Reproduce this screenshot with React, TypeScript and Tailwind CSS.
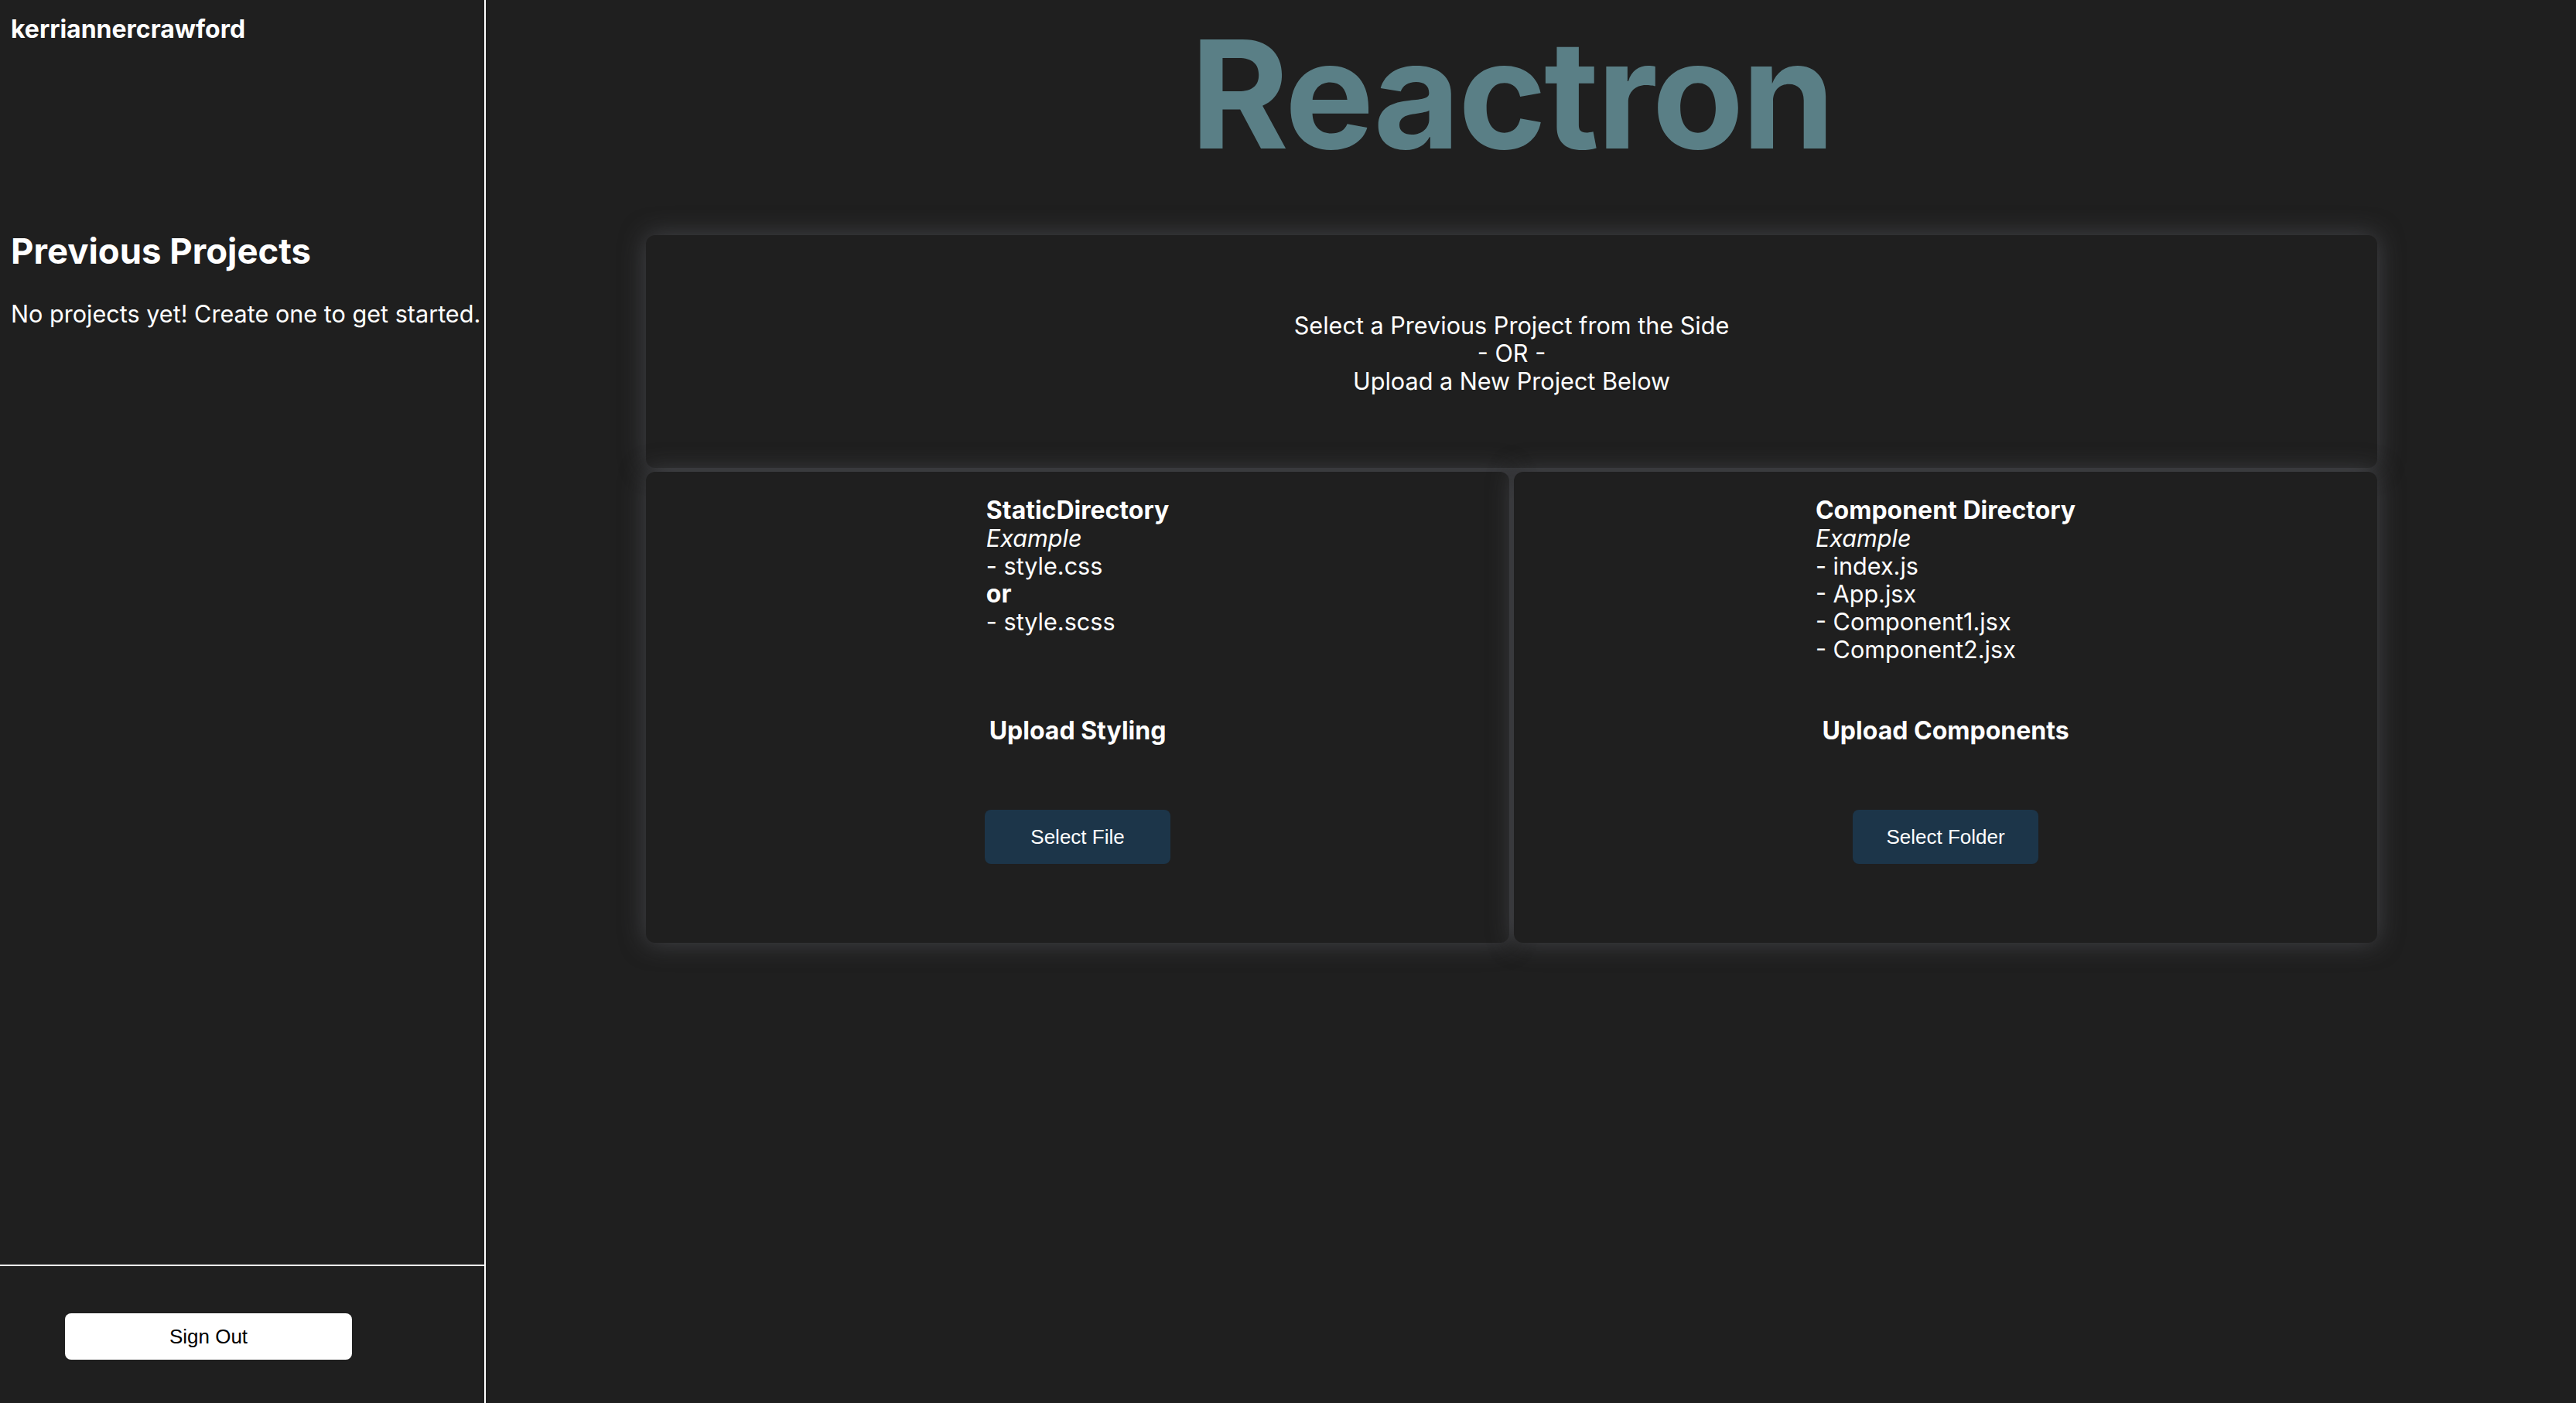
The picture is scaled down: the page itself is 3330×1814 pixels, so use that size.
const cardShadow = "bg-[#1f1f1f] rounded-[12px] shadow-[0_0_32px_rgba(92,94,100,0.6)]";

const uploads = [
  {
    title: "StaticDirectory",
    lines: [
      { text: "- style.css" },
      { text: "or", bold: true },
      { text: "- style.scss" },
    ],
    heading: "Upload Styling",
    button: "Select File",
  },
  {
    title: "Component Directory",
    lines: [
      { text: "- index.js" },
      { text: "- App.jsx" },
      { text: "- Component1.jsx" },
      { text: "- Component2.jsx" },
    ],
    heading: "Upload Components",
    button: "Select Folder",
  },
];

function Sidebar() {
  return (
    <aside className="w-[628px] shrink-0 h-full flex flex-col border-r-2 border-white">
      <div className="flex-1 pl-[14px] pt-[18px]">
        <p className="text-[32px] font-bold leading-[39px]">kerriannercrawford</p>
        <h2 className="mt-[241px] text-[45.5px] font-bold leading-[54px]">Previous Projects</h2>
        <p className="mt-[36px] text-[30.6px] leading-[36px] whitespace-nowrap">
          No projects yet! Create one to get started.
        </p>
      </div>
      <div className="h-[179px] border-t-2 border-white pl-[84px] pt-[61px]">
        <button className="w-[371px] h-[60px] bg-white text-black rounded-[8px] text-[26px] font-['Liberation_Sans',sans-serif]">
          Sign Out
        </button>
      </div>
    </aside>
  );
}

function UploadCard({ item }: { item: (typeof uploads)[number] }) {
  return (
    <div className={`${cardShadow} h-[609px] flex flex-col items-center pt-[32px]`}>
      <div className="h-[216px] text-[30.6px] leading-[36px]">
        <p className="font-bold text-[32px]">{item.title}</p>
        <p className="italic">Example</p>
        {item.lines.map((l) => (
          <p key={l.text} className={l.bold ? "font-bold text-[32px]" : ""}>
            {l.text}
          </p>
        ))}
      </div>
      <h3 className="mt-[69px] text-[32px] leading-[36px] font-bold">{item.heading}</h3>
      <button className="mt-[84px] w-[240px] h-[70px] bg-[#1c3549] rounded-[8px] text-[26px] text-white font-['Liberation_Sans',sans-serif]">
        {item.button}
      </button>
    </div>
  );
}

export default function App() {
  return (
    <div className="h-[1814px] w-full bg-[#1f1f1f] text-white font-['Inter',sans-serif] flex overflow-hidden">
      <Sidebar />
      <main className="flex-1 pl-[207px]">
        <div className="w-[2238px] flex flex-col">
          <h1 className="mt-[4px] text-center text-[194px] font-bold leading-[235px] tracking-[-3px] text-[#5a7f86]">
            Reactron
          </h1>
          <div className={`${cardShadow} mt-[65px] h-[301px] pt-[4px] flex flex-col items-center justify-center text-center text-[30.6px] leading-[36px]`}>
            <p>Select a Previous Project from the Side</p>
            <p>- OR -</p>
            <p>Upload a New Project Below</p>
          </div>
          <div className="mt-[5px] grid grid-cols-2 gap-[6px]">
            {uploads.map((u) => (
              <UploadCard key={u.title} item={u} />
            ))}
          </div>
        </div>
      </main>
    </div>
  );
}
